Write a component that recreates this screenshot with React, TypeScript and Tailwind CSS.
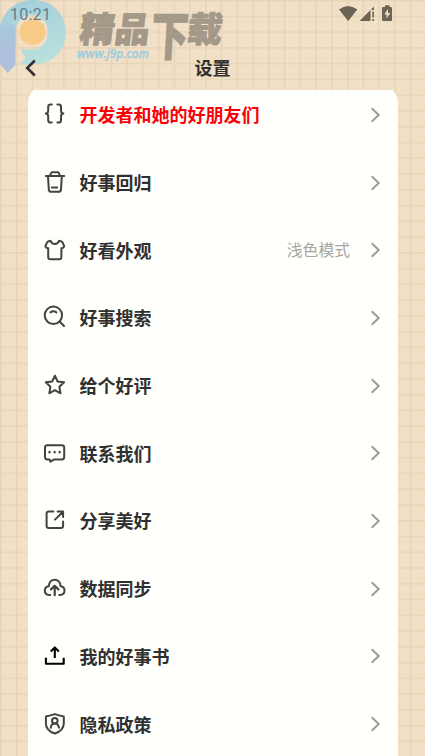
import React from 'react';

type Row = { label: string; icon: React.ReactNode; value?: string; tone?: string; ink?: string };

const rows: Row[] = [
  {
    label: '开发者和她的好朋友们',
    tone: 'text-[#fb0007]',
    icon: (
      <>
        <path d="M8.8 2.4H7.6Q5.2 2.4 5.2 4.8V8.6Q5.2 11.4 2.8 11.5Q5.2 11.7 5.2 14.4V18.2Q5.2 20.6 7.6 20.6H8.8" />
        <path d="M14.4 2.4H15.6Q18 2.4 18 4.8V8.6Q18 11.4 20.4 11.5Q18 11.7 18 14.4V18.2Q18 20.6 15.6 20.6H14.4" />
      </>
    ),
  },
  {
    label: '好事回归',
    icon: (
      <>
        <path d="M2.8 6H21.2M7.2 5.8L8 3Q8.2 2.2 9.2 2.2H14.6Q15.6 2.2 15.9 3L16.8 5.8" />
        <path d="M5 6.2L5.8 19.6Q6 21.8 8.2 21.8H15.6Q17.8 21.8 18 19.6L18.8 6.2M8.8 17.6H14.2" />
      </>
    ),
  },
  {
    label: '好看外观',
    value: '浅色模式',
    icon: (
      <path d="M7.6 2.8Q8.9 6 11.8 6Q14.7 6 16 2.8Q18.8 3 19.7 4.6L21.2 8.2Q20.8 10 18.4 10.3V19Q18.4 21.3 16.2 21.3H7.4Q5.2 21.3 5.2 19V10.3Q2.8 10 2.4 8.2L4 4.6Q4.9 3 7.6 2.8Z" />
    ),
  },
  {
    label: '好事搜索',
    icon: (
      <>
        <circle cx="10.4" cy="10.3" r="8.7" />
        <path d="M16.8 16.7L21 21M7.4 7.4Q10.4 5.2 13.4 7.4" />
      </>
    ),
  },
  {
    label: '给个好评',
    icon: (
      <path d="M11.9 2.7L14.6 8.5L21 9.3L16.4 13.8L17.5 20.3L11.9 17.2L6.3 20.3L7.4 13.8L2.8 9.3L9.2 8.5Z" />
    ),
  },
  {
    label: '联系我们',
    icon: (
      <>
        <path d="M4.4 4.2H18.8Q21.2 4.2 21.2 6.6V16Q21.2 18.4 18.8 18.4H11.2L7.4 20.7L6.6 18.4H4.4Q2 18.4 2 16V6.6Q2 4.2 4.4 4.2Z" />
        <path d="M6.5 11V11.4M11.6 11V11.4M16.7 11V11.4" strokeWidth="2.3" />
      </>
    ),
  },
  {
    label: '分享美好',
    icon: (
      <path d="M10.4 3.5H5.7Q3.6 3.5 3.6 5.6V17.8Q3.6 20 5.7 20H18Q20.1 20 20.1 17.8V13.4M12 11.6L20 3.8M14.6 3.5H20.1V9" />
    ),
  },
  {
    label: '数据同步',
    icon: (
      <>
        <path d="M7.2 19.1H6.2C3.4 19 1.8 17 1.8 14.6C1.8 12 3.7 10.4 5.8 10.2C6 6.3 8.4 3.7 11.7 3.7C15 3.7 17.4 6.3 17.6 10.2C19.7 10.4 21.5 12 21.5 14.6C21.5 17 19.9 19 17.1 19.1H16.2" />
        <path d="M11.7 19.2V10.2M8 13.4L11.7 9.8L15.4 13.4" strokeWidth="2.2" />
      </>
    ),
  },
  {
    label: '我的好事书',
    ink: 'text-black',
    icon: <path d="M2.9 13.8V19.8H20.7V13.8M11.8 14V3.8M7.8 7.4L11.8 3.4L15.8 7.4" strokeWidth="2.1" strokeLinecap="butt" />,
  },
  {
    label: '隐私政策',
    icon: (
      <>
        <path d="M11.8 2.1Q16 3.6 20.8 4.4V11.4C20.8 16.2 16.8 19.7 11.8 21.5C6.8 19.7 2.9 16.2 2.9 11.4V4.4Q7.6 3.6 11.8 2.1Z" />
        <circle cx="11.8" cy="8.7" r="2.8" />
        <path d="M7.7 15.8Q8.4 11.6 11.8 11.6Q15.2 11.6 16 15.8" />
      </>
    ),
  },
];

function Paper() {
  return (
    <svg className="absolute inset-0 size-full" aria-hidden="true">
      <defs>
        <pattern id="grid" x="0.1" y="-0.2" width="15.76" height="15.76" patternUnits="userSpaceOnUse">
          <path d="M0 0.8H15.76M0.8 0V15.76" stroke="#e5d2b5" strokeWidth="1.3" fill="none" />
        </pattern>
      </defs>
      <rect width="100%" height="100%" fill="url(#grid)" />
    </svg>
  );
}

function Watermark() {
  return (
    <svg className="pointer-events-none absolute left-0 top-0 overflow-visible" width="260" height="110" viewBox="0 0 260 110" aria-hidden="true">
      <defs>
        <linearGradient id="ring" x1="0" y1="0" x2="0.3" y2="1">
          <stop offset="0" stopColor="#a2cddb" />
          <stop offset="1" stopColor="#b8dfdc" />
        </linearGradient>
        <linearGradient id="stem" x1="0" y1="0" x2="0" y2="1">
          <stop offset="0" stopColor="#a4cbdb" />
          <stop offset="0.5" stopColor="#adc0dc" />
        </linearGradient>
      </defs>
      <path d="M0 26C4 10 16 0 33 0C52 0 66 14 66 32C66 51 52 64 34 64.500H20.500L25.500 57L20 49.500H32C41 49.500 48 42 48 32C48 22 41 15 32 15C22 15 15.500 22 15.500 32V50L0 45Z" fill="url(#ring)" />
      <path d="M0 26Q6 20 15.500 26V65L7.500 73L0 64Z" fill="url(#stem)" />
      <circle cx="32.500" cy="32" r="13" fill="#f8cb88" />
      <g fill="#a49989" stroke="#a49989" strokeWidth="0.9" fontFamily="'Noto Sans CJK SC', sans-serif" fontWeight="900" fontSize="35">
        <text transform="translate(78.500 42) skewX(-7)">精</text>
        <text transform="translate(113.500 42) skewX(-7)">品</text>
        <text transform="translate(150.500 55) skewX(-3) scale(1.060 1.480)">下</text>
        <text transform="translate(186 42) skewX(-7)">载</text>
      </g>
      <text x="77" y="57.500" fill="#9dcddd" stroke="#9dcddd" strokeWidth="0.3" fontFamily="'Open Sans', sans-serif" fontStyle="italic" fontWeight="600" fontSize="12.500" textLength="72" lengthAdjust="spacingAndGlyphs">www.j9p.com</text>
    </svg>
  );
}

function StatusIcons() {
  return (
    <svg width="56" height="18" viewBox="338 4 56 18" fill="#6d6455">
      <path d="M339 9.500Q348.200 2.500 357.300 9.500L348.200 21Z" />
      <path d="M359.500 21L370.500 10V21ZM371.500 9L374 6.500V10H371.500ZM372.400 11.500H374V17.500H372.400ZM372.400 19H374V21H372.400Z" />
      <path fillRule="evenodd" d="M385 5.300H389.500V7H391Q392 7 392 8V20Q392 21 391 21H383Q382 21 382 20V8Q382 7 383 7H385ZM388 9L384.300 14.600H386.600V18.600L390.300 13H388Z" />
    </svg>
  );
}

export default function App() {
  return (
    <div className="relative h-[756px] w-[425px] overflow-hidden bg-[#f2e0c6] font-['Noto_Sans_CJK_SC',sans-serif]">
      <Paper />
      <Watermark />
      <div className="relative flex h-full flex-col">
        <header className="h-[90px] shrink-0">
          <div className="flex h-[45px] items-start justify-between pl-[10px] pr-[31px] pt-[4px]">
            <span className="pt-px font-['Roboto',sans-serif] text-[16px] leading-[20px] tracking-[0.3px] text-[#5f7f8f]">10:21</span>
            <StatusIcons />
          </div>
          <div className="grid h-[45px] grid-cols-3 items-center pb-[2px]">
            <svg className="ml-[24px] mt-[3px]" width="14" height="20" viewBox="0 0 14 20" fill="none" stroke="#303030" strokeWidth="2.600">
              <path d="M10.800 2.500L3.200 10L10.800 17.500" />
            </svg>
            <h1 className="text-center text-[18px] font-bold leading-[26px] text-[#303030]">设置</h1>
          </div>
        </header>
        <main className="min-h-0 flex-1 overflow-hidden pl-[27.500px] pr-[27.500px]">
          <ul className="-mt-[5px] rounded-t-[18px] bg-[#fffffb]">
            {rows.map((row, i) => (
              <li key={row.label} className={`flex items-center pl-[15.500px] pr-[15px] ${i === 0 ? 'h-[63.700px] pb-[4px]' : 'h-[67.700px]'}`}>
                <svg
                  className={`mb-[1px] shrink-0 ${row.ink ?? 'text-[#424242]'}`}
                  width="24"
                  height="24"
                  viewBox="0 0 24 24"
                  fill="none"
                  stroke="currentColor"
                  strokeWidth="2"
                  strokeLinecap="round"
                  strokeLinejoin="round"
                >
                  {row.icon}
                </svg>
                <span className={`mb-[1px] ml-[12.600px] flex-1 text-[18px] font-bold leading-[26px] ${row.tone ?? 'text-[#303030]'}`}>{row.label}</span>
                {row.value && <span className="mb-[1px] mr-[17.500px] text-[15.800px] font-normal leading-[24px] text-[#a6a6a2]">{row.value}</span>}
                <svg className="shrink-0" width="15" height="18" viewBox="0 0 15 18" fill="none" stroke="#9b9b98" strokeWidth="2">
                  <path d="M3.700 2.200L10.700 9L3.700 15.800" />
                </svg>
              </li>
            ))}
          </ul>
        </main>
      </div>
    </div>
  );
}
